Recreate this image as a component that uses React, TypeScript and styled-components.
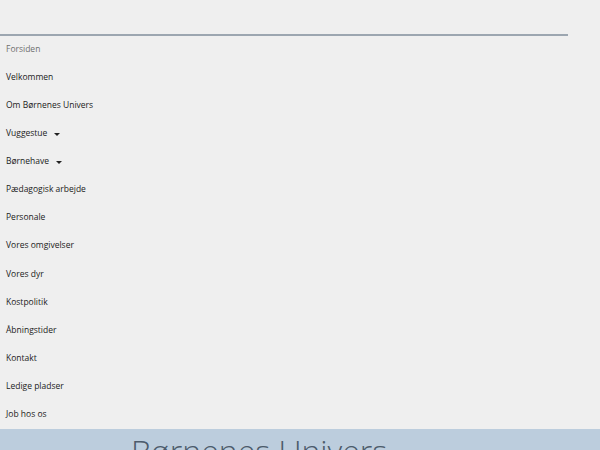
import React from "react";
import styled, { createGlobalStyle } from "styled-components";

const Global = createGlobalStyle`
  html, body { margin: 0; padding: 0; background: #efefef; }
  body { font-family: "Open Sans", "Liberation Sans", sans-serif; overflow: hidden; }
`;

const Page = styled.div`
  width: 600px;
  height: 450px;
  overflow: hidden;
  display: flex;
  flex-direction: column;
  background: #efefef;
`;

const TopSpace = styled.div`
  height: 34px;
  flex: none;
`;

const Nav = styled.nav`
  width: 568px;
  border-top: 2px solid #9ca6b0;
  display: flex;
  flex-direction: column;
`;

const Item = styled.a<{ $active?: boolean }>`
  height: 28.1px;
  box-sizing: border-box;
  padding-bottom: 3.5px;
  display: flex;
  align-items: center;
  gap: 7px;
  padding-left: 6px;
  font-size: 8.5px;
  color: ${(p) => (p.$active ? "#6f6f6f" : "#222222")};
  text-decoration: none;
`;

const Caret = styled.span`
  width: 0;
  height: 0;
  border-left: 3.5px solid transparent;
  border-right: 3.5px solid transparent;
  border-top: 3.5px solid #222222;
  margin-top: 3px;
`;

const Banner = styled.div`
  flex: 1;
  background: #bccddd;
  padding-left: 131px;
  overflow: hidden;
`;

const Title = styled.div`
  font-family: "Open Sans", "Liberation Sans", sans-serif;
  font-weight: 300;
  font-size: 32px;
  color: #4c5b6b;
  line-height: 1;
  margin-top: 6px;
  white-space: nowrap;
`;

const items: { label: string; caret?: boolean; active?: boolean }[] = [
  { label: "Forsiden", active: true },
  { label: "Velkommen" },
  { label: "Om Børnenes Univers" },
  { label: "Vuggestue", caret: true },
  { label: "Børnehave", caret: true },
  { label: "Pædagogisk arbejde" },
  { label: "Personale" },
  { label: "Vores omgivelser" },
  { label: "Vores dyr" },
  { label: "Kostpolitik" },
  { label: "Åbningstider" },
  { label: "Kontakt" },
  { label: "Ledige pladser" },
  { label: "Job hos os" },
];

export default function App() {
  return (
    <Page>
      <Global />
      <TopSpace />
      <Nav>
        {items.map((it) => (
          <Item key={it.label} $active={it.active} href="#">
            {it.label}
            {it.caret && <Caret />}
          </Item>
        ))}
      </Nav>
      <Banner>
        <Title>Børnenes Univers</Title>
      </Banner>
    </Page>
  );
}
